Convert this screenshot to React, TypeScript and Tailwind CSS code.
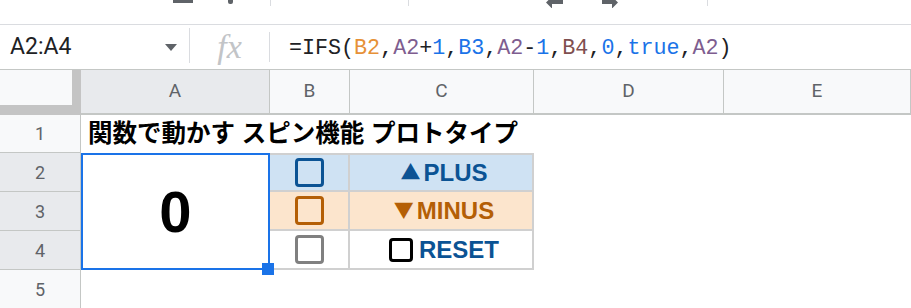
import React from "react";

const hdrText = "text-[19px] text-[#5f6368] font-['Roboto',sans-serif]";

function ColHeader({ label, sel }: { label: string; sel?: boolean }) {
  return (
    <div
      className={`flex items-center justify-center border-r border-b-2 border-[#c4c7c5] ${hdrText} ${
        sel ? "bg-[#e8eaed]" : "bg-[#f8f9fa]"
      }`}
    >
      {label}
    </div>
  );
}

function RowHeader({ label, sel, row }: { label: string; sel?: boolean; row: string }) {
  return (
    <div
      className={`col-start-1 ${row} flex items-center justify-center border-r border-b border-[#c4c7c5] text-[18px] text-[#5f6368] font-['Roboto',sans-serif] ${
        sel ? "bg-[#e8eaed]" : "bg-[#f8f9fa]"
      }`}
    >
      {label}
    </div>
  );
}

function Check({ color }: { color: string }) {
  return <div className={`w-[29px] h-[29px] border-[3px] rounded-[4px] ${color}`} />;
}

export default function App() {
  const d = "text-[#202124]";
  return (
    <div className="w-[911px] h-[308px] overflow-hidden bg-white">
      {/* toolbar remnants */}
      <div className="h-[25px] border-b border-[#dadce0] flex items-start">
        <div className="w-[173px]" />
        <div className="w-[20px] h-[3px] bg-[#5f6368]" />
        <div className="w-[35px]" />
        <div className="w-[5px] h-[4px] bg-[#5f6368] rounded-b-[2px]" />
        <div className="w-[37px]" />
        <div className="w-px h-[6px] bg-[#dadce0]" />
        <div className="w-[137px]" />
        <div className="w-px h-[6px] bg-[#dadce0]" />
        <div className="w-[137px]" />
        <svg width="17" height="8" viewBox="0 0 17 8">
          <path d="M0 2.5 L6 -3.5 L6 0 L17 0 L17 4 L6 4 L6 8.5 Z" fill="#5f6368" />
        </svg>
        <div className="w-[39px]" />
        <svg width="16" height="8" viewBox="0 0 16 8">
          <path d="M16 2.5 L10 -3.5 L10 0 L0 0 L0 4 L10 4 L10 8.5 Z" fill="#5f6368" />
        </svg>
        <div className="w-[89px]" />
        <div className="w-px h-[6px] bg-[#dadce0]" />
      </div>

      {/* formula bar */}
      <div className="h-[45px] border-b border-[#c4c7c5] flex items-center">
        <div className="w-[189px] flex items-center justify-between pl-[10px] pr-[12px]">
          <span className="text-[23px] text-[#202124] font-['Roboto',sans-serif]">A2:A4</span>
          <svg width="12" height="7" viewBox="0 0 12 7">
            <path d="M0 0 L12 0 L6 7 Z" fill="#5f6368" />
          </svg>
        </div>
        <div className="w-px h-[35px] bg-[#dadce0] self-start mt-[3px]" />
        <div className="w-[79px] flex items-center justify-center">
          <span className="text-[34px] italic text-[#c2c4c7] font-['Liberation_Serif',serif] leading-none">
            fx
          </span>
        </div>
        <div className="w-px h-[30px] bg-[#dadce0]" />
        <div className="pl-[19px] pt-[3px] text-[21.7px] font-['Liberation_Mono',monospace] whitespace-pre leading-none">
          <span className={d}>=IFS(</span>
          <span className="text-[#e69138]">B2</span>
          <span className={d}>,</span>
          <span className="text-[#7e5d8f]">A2</span>
          <span className={d}>+</span>
          <span className="text-[#1a73e8]">1</span>
          <span className={d}>,</span>
          <span className="text-[#1a73e8]">B3</span>
          <span className={d}>,</span>
          <span className="text-[#7e5d8f]">A2</span>
          <span className={d}>-</span>
          <span className="text-[#1a73e8]">1</span>
          <span className={d}>,</span>
          <span className="text-[#7f4f4f]">B4</span>
          <span className={d}>,</span>
          <span className="text-[#1a73e8]">0</span>
          <span className={d}>,</span>
          <span className="text-[#1a73e8]">true</span>
          <span className={d}>,</span>
          <span className="text-[#7e5d8f]">A2</span>
          <span className={d}>)</span>
        </div>
      </div>

      {/* grid */}
      <div className="grid grid-cols-[81px_189px_80px_184px_190px_187px] grid-rows-[45px_38px_39px_39px_39px_39px]">
        {/* corner */}
        <div className="col-start-1 row-start-1 bg-[#c4c4c4]">
          <div className="w-[72px] h-[35px] bg-[#f8f9fa]" />
        </div>
        <ColHeader label="A" sel />
        <ColHeader label="B" />
        <ColHeader label="C" />
        <ColHeader label="D" />
        <ColHeader label="E" />

        <RowHeader label="1" row="row-start-2" />
        <RowHeader label="2" row="row-start-3" sel />
        <RowHeader label="3" row="row-start-4" sel />
        <RowHeader label="4" row="row-start-5" sel />
        <RowHeader label="5" row="row-start-6" />

        {/* row 1 title */}
        <div className="col-start-2 col-span-5 row-start-2 flex items-center pl-[7px]">
          <span className="text-[24.5px] font-bold text-black whitespace-nowrap font-['Liberation_Sans','Noto_Sans_CJK_JP',sans-serif] [word-spacing:0px]">
            関数で動かす スピン機能 プロトタイプ
          </span>
        </div>

        {/* merged A2:A4 */}
        <div className="col-start-2 row-start-3 row-span-3 relative border-2 border-[#1a73e8] flex items-center justify-center z-10">
          <span className="text-[58px] font-bold text-black font-['Liberation_Sans',sans-serif] leading-none">
            0
          </span>
          <div className="absolute right-[-6px] bottom-[-7px] w-[12px] h-[12px] bg-[#1a73e8]" />
        </div>

        {/* B2 / C2 */}
        <div className="col-start-3 row-start-3 bg-[#cfe2f3] border-t-2 border-r-2 border-b-2 border-[#d0d0d0] flex items-center justify-center">
          <Check color="border-[#0b5394]" />
        </div>
        <div className="col-start-4 row-start-3 bg-[#cfe2f3] border-t-2 border-r-2 border-b-2 border-[#d0d0d0] flex items-center justify-center pl-[6px] font-['Liberation_Sans',sans-serif] font-bold text-[24px] text-[#0b5394]">
          <span className="whitespace-nowrap">
            <span className="font-['Noto_Sans_CJK_JP',sans-serif] font-normal text-[20px] relative -top-[1px] mr-[3px]">▲</span>PLUS
          </span>
        </div>

        {/* B3 / C3 */}
        <div className="col-start-3 row-start-4 bg-[#fce5cd] border-r-2 border-b-2 border-[#d0d0d0] flex items-center justify-center">
          <Check color="border-[#b45f06]" />
        </div>
        <div className="col-start-4 row-start-4 bg-[#fce5cd] border-r-2 border-b-2 border-[#d0d0d0] flex items-center justify-center pl-[6px] font-['Liberation_Sans',sans-serif] font-bold text-[24px] text-[#b45f06]">
          <span className="whitespace-nowrap">
            <span className="font-['Noto_Sans_CJK_JP',sans-serif] font-normal text-[20px] relative -top-[1px] mr-[3px]">▼</span>MINUS
          </span>
        </div>

        {/* B4 / C4 */}
        <div className="col-start-3 row-start-5 bg-white border-r-2 border-b-2 border-[#d0d0d0] flex items-center justify-center">
          <Check color="border-[#808080]" />
        </div>
        <div className="col-start-4 row-start-5 bg-white border-r-2 border-b-2 border-[#d0d0d0] flex items-center justify-center pl-[6px] font-['Liberation_Sans',sans-serif] font-bold text-[24px] text-[#0b5394]">
          <div className="w-[24px] h-[24px] border-[3px] border-black rounded-[4px] mr-[6px]" />
          <span className="whitespace-nowrap">RESET</span>
        </div>
      </div>
    </div>
  );
}
